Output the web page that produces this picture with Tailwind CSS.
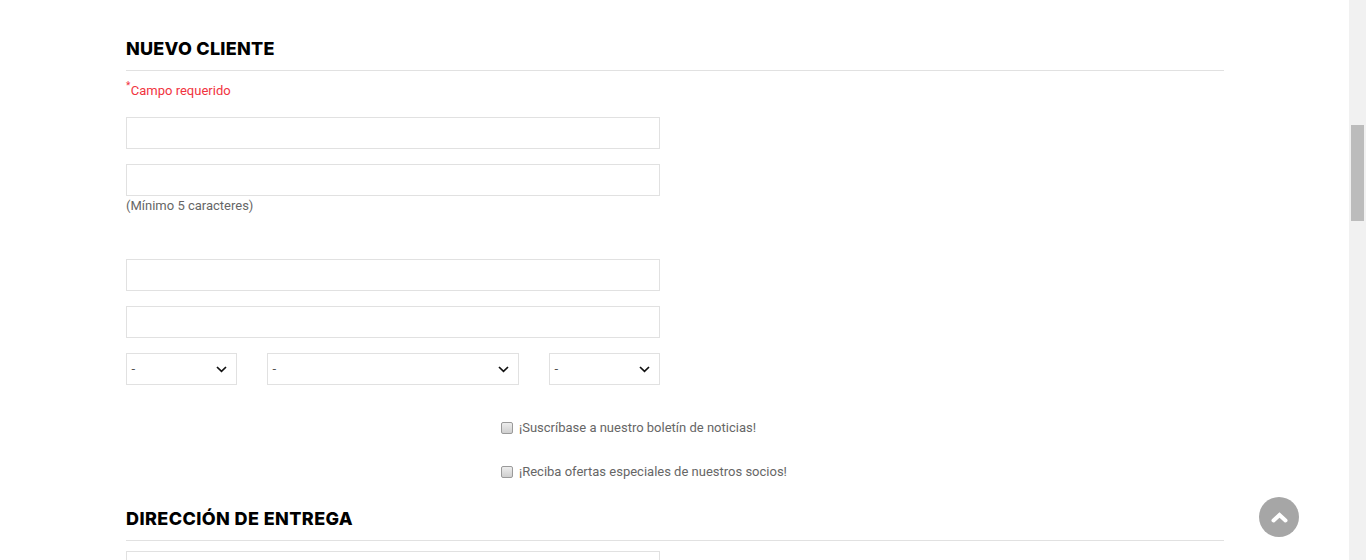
<!DOCTYPE html>
<html lang="es">
<head>
<meta charset="utf-8">
<title>Nuevo cliente</title>
<script src="https://cdn.jsdelivr.net/npm/@tailwindcss/browser@4"></script>
</head>
<body class="bg-white overflow-hidden">
<div class="relative flex h-[560px] w-[1366px] overflow-hidden font-['Roboto',sans-serif] text-[13px] text-[#666]">
  <main class="w-[1349px] pl-[126px] pr-[125px] pt-[37px]">
    <h2 class="h-[34px] border-b border-[#e1e1e1] font-['Inter',sans-serif] text-[18px] leading-[23px] tracking-[0.25px] font-extrabold text-black">NUEVO CLIENTE</h2>
    <p class="mt-[9px] h-[30px] text-[#f13340] leading-[22px]"><sup class="mr-[0.5px] text-[10px] leading-[0] top-[-6px]">*</sup>Campo requerido</p>
    <form class="mt-[7px] w-[534px]">
      <input type="text" aria-label="Nombre" class="block h-[32px] w-full border border-[#e1e1e1] bg-white">
      <input type="password" aria-label="Contraseña" class="mt-[15px] block h-[32px] w-full border border-[#e1e1e1] bg-white">
      <p class="h-[63px] pt-[1px] leading-[18px]">(Mínimo 5 caracteres)</p>
      <input type="text" aria-label="Apellido" class="block h-[32px] w-full border border-[#e1e1e1] bg-white">
      <input type="email" aria-label="Correo" class="mt-[15px] block h-[32px] w-full border border-[#e1e1e1] bg-white">
      <div class="mt-[15px] flex gap-[30px]">
        <div class="relative w-[111px]">
          <select aria-label="Día" class="block h-[32px] w-full appearance-none border border-[#e1e1e1] bg-white pl-[4px] font-['Inter',sans-serif] text-[10px] text-[#333]"><option>-</option></select>
          <svg class="absolute right-[10px] top-[13px] h-[7px] w-[11px]" viewBox="0 0 11 7" fill="none" stroke="#111" stroke-width="1.7"><path d="M1 1l4.5 4.4L10 1"/></svg>
        </div>
        <div class="relative w-[252px]">
          <select aria-label="Mes" class="block h-[32px] w-full appearance-none border border-[#e1e1e1] bg-white pl-[4px] font-['Inter',sans-serif] text-[10px] text-[#333]"><option>-</option></select>
          <svg class="absolute right-[10px] top-[13px] h-[7px] w-[11px]" viewBox="0 0 11 7" fill="none" stroke="#111" stroke-width="1.7"><path d="M1 1l4.5 4.4L10 1"/></svg>
        </div>
        <div class="relative w-[111px]">
          <select aria-label="Año" class="block h-[32px] w-full appearance-none border border-[#e1e1e1] bg-white pl-[4px] font-['Inter',sans-serif] text-[10px] text-[#333]"><option>-</option></select>
          <svg class="absolute right-[10px] top-[13px] h-[7px] w-[11px]" viewBox="0 0 11 7" fill="none" stroke="#111" stroke-width="1.7"><path d="M1 1l4.5 4.4L10 1"/></svg>
        </div>
      </div>
    </form>
    <label class="ml-[375px] mt-[34px] flex h-[18px] items-center gap-[6px] leading-[18px]">
      <span class="h-[12px] w-[12px] rounded-[2px] border border-[#9a9a9a] bg-gradient-to-b from-[#ededed] to-[#cfcfcf]"></span>¡Suscríbase a nuestro boletín de noticias!
    </label>
    <label class="ml-[375px] mt-[26px] flex h-[18px] items-center gap-[6px] leading-[18px]">
      <span class="h-[12px] w-[12px] rounded-[2px] border border-[#9a9a9a] bg-gradient-to-b from-[#ededed] to-[#cfcfcf]"></span>¡Reciba ofertas especiales de nuestros socios!
    </label>
    <h2 class="mt-[26px] h-[34px] border-b border-[#e1e1e1] font-['Inter',sans-serif] text-[18px] leading-[23px] tracking-[0.4px] font-extrabold text-black">DIRECCIÓN DE ENTREGA</h2>
    <input type="text" aria-label="Dirección" class="mt-[10px] block h-[32px] w-[534px] border border-[#e1e1e1] bg-white">
  </main>
  <div class="w-[17px] bg-[#f1f1f1] pl-[2px] pt-[125px]">
    <div class="h-[96px] w-[13px] bg-[#bcbcbc]"></div>
  </div>
  <a href="#" aria-label="Volver arriba" class="absolute left-[1259px] top-[497px] flex h-[40px] w-[40px] items-center justify-center rounded-full bg-[#a6a6a6]">
    <svg class="h-[11px] w-[17px]" viewBox="0 0 17 11" fill="none" stroke="#fff" stroke-width="4" stroke-linecap="round" stroke-linejoin="miter"><path d="M2.5 8.5l6-5.5 6 5.5"/></svg>
  </a>
</div>
</body>
</html>
